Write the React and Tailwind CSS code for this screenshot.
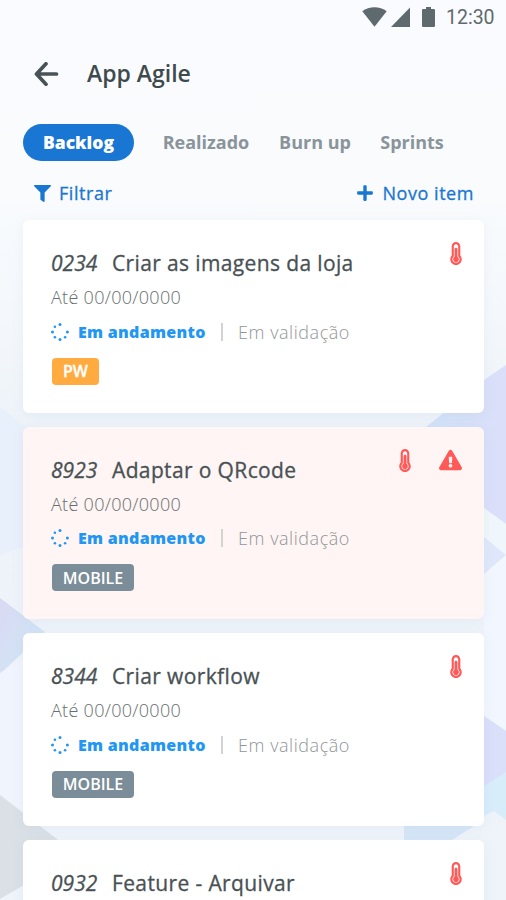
import React, { useState } from "react";
import { FaFilter, FaPlus, FaExclamationTriangle, FaThermometerThreeQuarters } from "react-icons/fa";

const tabs = [
  { name: "Backlog", className: "w-[111px]" },
  { name: "Realizado", className: "ml-[28px] w-[88px]" },
  { name: "Burn up", className: "ml-[28px] w-[74px]" },
  { name: "Sprints", className: "ml-[27px] w-[66px]" },
];

const items = [
  { id: "0234", title: "Criar as imagens da loja", tag: "PW", hot: true },
  { id: "8923", title: "Adaptar o QRcode", tag: "MOBILE", hot: true, late: true },
  { id: "8344", title: "Criar workflow", tag: "MOBILE", hot: true },
  { id: "0932", title: "Feature - Arquivar", tag: "MOBILE", hot: true },
];

const StatusBar = () => (
  <div className="flex h-[34px] shrink-0 items-center justify-end pr-[11px] text-[#5f6a6e]">
    <svg width="25" height="20" viewBox="0 0 25 20" fill="currentColor">
      <path d="M0.3 4.3C7-1.1 18-1.1 24.7 4.3L12.5 19.8Z" />
    </svg>
    <svg className="ml-[4px]" width="19" height="20" viewBox="0 0 19 20" fill="currentColor">
      <path d="M19 0.5V20H0Z" />
    </svg>
    <svg className="ml-[12px]" width="13" height="20" viewBox="0 0 13 20" fill="currentColor">
      <path d="M4 0h5v2h2.9q1.1 0 1.1 1.1v15.8q0 1.1-1.1 1.1H1.1Q0 20 0 18.900V3.100Q0 2 1.100 2H4Z" />
    </svg>
    <span className="ml-[11px] w-[49px] whitespace-nowrap pt-[2px] font-[Roboto] text-[19.500px] leading-none">12:30</span>
  </div>
);

const Spinner = () => (
  <svg width="18" height="18" viewBox="0 0 18 18" fill="#2196f3">
    <circle cx="9" cy="1.600" r="1.500" />
    <circle cx="3.900" cy="3.700" r="1.300" />
    <circle cx="1.500" cy="9" r="1.500" />
    <circle cx="3.900" cy="14.200" r="1.300" />
    <circle cx="9" cy="16.400" r="1.500" />
    <circle cx="14.100" cy="14.200" r="1.300" />
    <circle cx="16.400" cy="9" r="1.500" />
  </svg>
);

// Geometric backdrop behind the list
const Backdrop = () => (
  <svg className="absolute inset-0 -z-10" width="506" height="900" viewBox="0 0 506 900">
    <defs>
      <linearGradient id="base" x1="0" y1="0" x2="0" y2="1">
        <stop offset="0" stopColor="#fafbfe" />
        <stop offset="0.21" stopColor="#f9fbfd" />
        <stop offset="0.35" stopColor="#f4f8fc" />
        <stop offset="0.47" stopColor="#eef3f9" />
        <stop offset="1" stopColor="#eff4fa" />
      </linearGradient>
      <linearGradient id="violet" x1="0" y1="0" x2="1" y2="0">
        <stop offset="0" stopColor="#cfe3f7" />
        <stop offset="1" stopColor="#dcdffa" />
      </linearGradient>
      <linearGradient id="corner" x1="0" y1="0" x2="1" y2="1">
        <stop offset="0" stopColor="#d9d9f3" />
        <stop offset="1" stopColor="#cfe9f7" />
      </linearGradient>
    </defs>
    <rect width="506" height="900" fill="url(#base)" />
    <path d="M0 407L30 430V545L0 555Z" fill="#e8f0fb" />
    <path d="M506 365L484 380L420 432L484 508L506 524Z" fill="url(#violet)" />
    <path d="M484 508L506 524V555L484 573Z" fill="#f0f7fc" />
    <path d="M484 537L506 555L484 574Z" fill="#dfe8fa" />
    <path d="M506 555V731L484 716V574Z" fill="#f2f6fe" />
    <path d="M0 598L45 632L0 674Z" fill="url(#corner)" />
    <path d="M0 673L30 655V815L0 795Z" fill="#f0f4fd" />
    <path d="M484 716L506 731V773L484 816Z" fill="#dadffa" />
    <path d="M506 772L484 786V816L494 811L506 820Z" fill="#d8edfa" />
    <path d="M0 795L58 840L24 885L0 899Z" fill="#dae0e6" />
    <path d="M404 826H474L452 840H404Z" fill="#d5e6f7" />
  </svg>
);

const BacklogCard = ({ item }) => (
  <div
    className={`relative h-[192.500px] shrink-0 rounded-[6px] px-[28px] pt-[28px] shadow-[0_2px_12px_rgba(150,175,195,0.12)] ${
      item.late ? "bg-[#fff5f4]" : "bg-white"
    }`}
  >
    <div className="flex h-[30px] items-center whitespace-nowrap text-[21px] font-medium leading-[30px] text-[#485154] [-webkit-text-stroke:0.3px]">
      <span className="w-[61px] italic">{item.id}</span>
      <span className="tracking-[0.37px]">{item.title}</span>
    </div>
    <div className="mt-[7px] h-[24px] text-[18px] font-light leading-[24px] tracking-[0.3px] text-[#686e6f]">
      Até 00/00/0000
    </div>
    <div className="mt-[10.500px] flex h-[24px] items-center whitespace-nowrap leading-[24px]">
      <Spinner />
      <span className="ml-[9px] w-[128px] text-[16px] font-extrabold tracking-[0.3px] text-[#2196f3]">Em andamento</span>
      <span className="ml-[15px] h-[18px] w-[2px] bg-[#d1d4d5]" />
      <span className="ml-[15px] text-[18px] font-light tracking-[0.55px] text-[#919697]">Em validação</span>
    </div>
    <span
      className={`mt-[14px] ml-[0.500px] inline-flex h-[27px] items-center justify-center rounded-[4px] pl-px text-[16px] font-semibold text-white ${
        item.tag === "PW" ? "w-[47px] bg-[#ffab40] [-webkit-text-stroke:0.3px]" : "w-[82px] bg-[#7b8d98]"
      }`}
    >
      {item.tag}
    </span>
    <div className="absolute right-[22px] top-[22px] flex items-center gap-[28px] text-[#ff5a57]">
      {item.hot && <FaThermometerThreeQuarters className="h-[23px] w-[12px]" />}
      {item.late && <FaExclamationTriangle className="h-[22px] w-[23px]" />}
    </div>
  </div>
);

const App = () => {
  const [active, setActive] = useState("Backlog");

  return (
    <div className="relative isolate flex h-[900px] w-[506px] flex-col overflow-hidden font-['Open_Sans',sans-serif]">
      <Backdrop />
      <StatusBar />

      <header className="flex h-[79px] shrink-0 items-center pl-[34px]">
        <svg width="25" height="24" viewBox="0 0 25 24" fill="none" stroke="#485357" strokeWidth="3.700">
          <path d="M12 1.800L2.500 12L12 22.200M3 12H22.500" strokeLinecap="round" strokeLinejoin="round" />
        </svg>
        <h1 className="ml-[28px] text-[23px] font-semibold leading-none text-[#3f4a4e]">App Agile</h1>
      </header>

      <nav className="mt-[11px] flex h-[37px] shrink-0 items-center pl-[23px]">
        {tabs.map((tab) => (
          <button
            key={tab.name}
            onClick={() => setActive(tab.name)}
            className={`h-full whitespace-nowrap ${tab.className} ${
              active === tab.name
                ? "rounded-full bg-[#1976d2] text-[17.500px] font-extrabold text-white"
                : "text-[18px] font-bold text-[#89949b]"
            }`}
          >
            {tab.name}
          </button>
        ))}
      </nav>

      <div className="mt-[19px] flex h-[26px] shrink-0 items-center justify-between pl-[34px] pr-[32px] text-[18px] font-medium tracking-[0.55px] text-[#1976d2]">
        <button className="flex items-center gap-[8px] [-webkit-text-stroke:0.3px]">
          <FaFilter className="size-[17px]" />
          Filtrar
        </button>
        <button className="flex items-center gap-[8px] [-webkit-text-stroke:0.3px]">
          <FaPlus className="size-[18px]" />
          Novo item
        </button>
      </div>

      <main className="mt-[14px] flex shrink-0 flex-col gap-[14.200px] pl-[23px] pr-[22px]">
        {items.map((item) => (
          <BacklogCard key={item.id} item={item} />
        ))}
      </main>
    </div>
  );
};

export default App;
